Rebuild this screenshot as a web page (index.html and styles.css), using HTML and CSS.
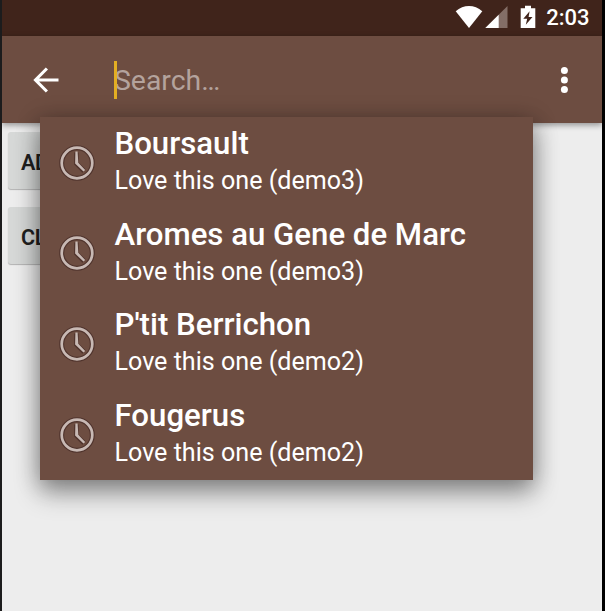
FILE: index.html
```
<!DOCTYPE html>
<html lang="en">
<head>
<meta charset="utf-8">
<title>Search</title>
<link rel="stylesheet" href="styles.css">
</head>
<body>
<svg class="defs" width="0" height="0" aria-hidden="true">
  <symbol id="clock" viewBox="0 0 38 38">
    <g fill="none" stroke="#4b302a" stroke-opacity=".85">
      <circle cx="19" cy="19" r="15.3" stroke-width="5"/>
      <path d="M18.4 8.5V19.5L26 27" stroke-width="4.6"/>
    </g>
    <circle cx="19" cy="19" r="15.3" fill="none" stroke="#c8b9b4" stroke-width="2.7"/>
    <path d="M17.4 7.6h2.200l.7 11.200 6.900 7.100-1.700 1.700-8.400-8z" fill="#c8b9b4"/>
  </symbol>
</svg>
<div class="screen">
  <header class="status">
    <svg class="wifi" width="28" height="24" viewBox="0 0 28 24"><path d="M.7 6.2C8.500-.7 19.500-.7 27.300 6.200L14 23z" fill="#fff"/></svg>
    <svg class="signal" width="23" height="24" viewBox="0 0 23 24"><path d="M22.500 1v22H.3z" fill="#836e67"/><path d="M13.700 9.700V23H.3z" fill="#fff"/></svg>
    <svg class="battery" width="16" height="24" viewBox="0 0 16 24"><path d="M5 .8h6v2.400h4.300V23H.7V3.200H5z" fill="#fff"/><path d="M9.600 6.300 3.300 13.700h3.900L5.800 19.800l6.700-7.900H8.600z" fill="#40241b"/></svg>
    <span class="time">2:03</span>
  </header>
  <div class="toolbar">
    <svg class="back" width="26" height="26" viewBox="0 0 26 26"><path d="M25.500 13H2.500M13.900 1.500 2.500 13l11.400 11.500" fill="none" stroke="#fff" stroke-width="3.100"/></svg>
    <div class="field"><span class="hint">Search…</span><i class="caret"></i></div>
    <svg class="more" width="8" height="28" viewBox="0 0 8 28"><g fill="#fff"><circle cx="4.400" cy="4.500" r="3.500"/><circle cx="4.400" cy="14" r="3.500"/><circle cx="4.400" cy="23.500" r="3.500"/></g></svg>
  </div>
  <main class="content">
    <div class="button">ADD</div>
    <div class="button">CLEAR</div>
  </main>
  <ul class="suggestions">
    <li class="row"><svg class="clock"><use href="#clock"/></svg><div><div class="title">Boursault</div><div class="sub">Love this one (demo3)</div></div></li>
    <li class="row"><svg class="clock"><use href="#clock"/></svg><div><div class="title">Aromes au Gene de Marc</div><div class="sub">Love this one (demo3)</div></div></li>
    <li class="row"><svg class="clock"><use href="#clock"/></svg><div><div class="title">P'tit Berrichon</div><div class="sub">Love this one (demo2)</div></div></li>
    <li class="row"><svg class="clock"><use href="#clock"/></svg><div><div class="title">Fougerus</div><div class="sub">Love this one (demo2)</div></div></li>
  </ul>
</div>
</body>
</html>
```
FILE: styles.css
```
* { box-sizing: border-box; }
body { margin: 0; font-family: Roboto, sans-serif; background: #000; overflow: hidden; }
.defs { position: absolute; }
.screen {
  position: relative;
  height: 611px;
  border-left: 2px solid #1c1c1d;
  border-right: 3px solid #000;
  background: #ededed;
  overflow: hidden;
}
.status {
  display: flex;
  align-items: center;
  justify-content: flex-end;
  height: 36px;
  padding: 0 12.5px 3px 0;
  background: #40241b;
  color: #fff;
}
.signal { margin-left: 2px; }
.battery { margin-left: 12px; }
.time { margin-left: 10.5px; font-size: 22px; font-weight: 500; line-height: 24px; padding-top: 3px; }
.toolbar {
  position: relative;
  display: flex;
  align-items: center;
  height: 87px;
  padding: 0 34px 0 31px;
  background: #6d4d41;
  box-shadow: 0 2px 6px rgba(0, 0, 0, .4);
}
.field {
  position: relative;
  flex: 1;
  height: 38px;
  margin-left: 55px;
  font-size: 28.4px;
  line-height: 40px;
  color: #b4a39d;
}
.caret { position: absolute; left: 0; top: 0; width: 3px; height: 38px; background: #e3ae23; }
.content {
  display: flex;
  flex-direction: column;
  align-items: flex-start;
  gap: 18px;
  padding: 9px 6px;
}
.button {
  width: 130px;
  height: 57px;
  padding-left: 13px;
  border-radius: 3px;
  background: #d6d8d7;
  box-shadow: 0 1px 1px rgba(0, 0, 0, .25);
  font-size: 21.5px;
  font-weight: 600;
  letter-spacing: -.4px;
  line-height: 61px;
  color: #202020;
}
.suggestions {
  position: absolute;
  left: 38px;
  top: 117px;
  width: 493px;
  height: 363px;
  margin: 0;
  padding: 0;
  list-style: none;
  background: #6d4d41;
  color: #fff;
  box-shadow: 0 14px 24px rgba(0, 0, 0, .3), 0 3px 22px rgba(0, 0, 0, .32);
}
.row { display: flex; align-items: center; height: 90.6px; }
.clock { width: 38px; height: 38px; margin: 1px 18.7px 0 17.8px; flex: none; }
.title { font-size: 31.2px; font-weight: 500; line-height: 38px; }
.sub { font-size: 25.1px; line-height: 36px; }
```
